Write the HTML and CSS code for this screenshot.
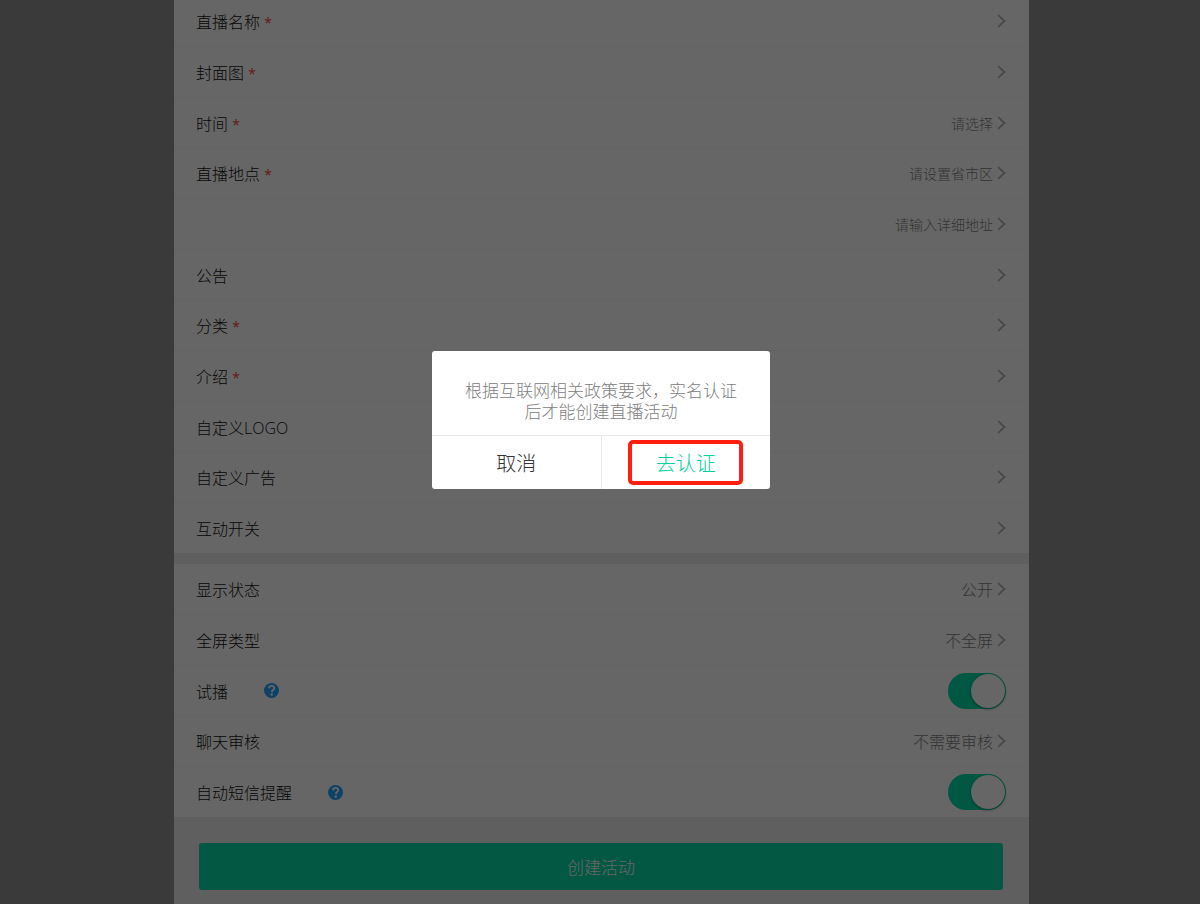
FILE: index.html
```html
<!DOCTYPE html>
<html lang="zh-CN">
<head>
    <meta charset="UTF-8">
    <meta name="viewport" content="width=device-width, initial-scale=1.0">
    <title>创建活动</title>
    <link rel="stylesheet" href="styles.css">
</head>
<body>
    <svg class="sprite" aria-hidden="true">
        <symbol id="arrow" viewBox="0 0 9 14">
            <path d="M1.2 1.2L7.4 7l-6.2 5.8" fill="none" stroke="currentColor" stroke-width="1.8"/>
        </symbol>
        <symbol id="help" viewBox="0 0 14 14">
            <circle cx="7" cy="7" r="7" fill="currentColor"/>
            <path d="M4.7 5C4.8 3.4 5.8 2.7 7.1 2.7s2.4.8 2.4 2.1c0 1.6-2.1 1.8-2.2 3.7" fill="none" stroke="#fff" stroke-width="1.7"/>
            <circle cx="7.2" cy="10.7" r="1.1" fill="#fff"/>
        </symbol>
    </svg>

    <form class="page">
        <!-- Basic info -->
        <div class="list">
            <button type="button" class="row"><span class="label">直播名称 <i class="required">*</i></span><svg class="arrow"><use href="#arrow"/></svg></button>
            <button type="button" class="row"><span class="label">封面图 <i class="required">*</i></span><svg class="arrow"><use href="#arrow"/></svg></button>
            <button type="button" class="row"><span class="label">时间 <i class="required">*</i></span><span class="value hint">请选择</span><svg class="arrow"><use href="#arrow"/></svg></button>
            <button type="button" class="row"><span class="label">直播地点 <i class="required">*</i></span><span class="value hint">请设置省市区</span><svg class="arrow"><use href="#arrow"/></svg></button>
            <div class="row">
                <input type="text" class="address" placeholder="请输入详细地址" aria-label="详细地址">
                <svg class="arrow"><use href="#arrow"/></svg>
            </div>
            <button type="button" class="row"><span class="label">公告</span><svg class="arrow"><use href="#arrow"/></svg></button>
            <button type="button" class="row"><span class="label">分类 <i class="required">*</i></span><svg class="arrow"><use href="#arrow"/></svg></button>
            <button type="button" class="row"><span class="label">介绍 <i class="required">*</i></span><svg class="arrow"><use href="#arrow"/></svg></button>
            <button type="button" class="row"><span class="label">自定义LOGO</span><svg class="arrow"><use href="#arrow"/></svg></button>
            <button type="button" class="row"><span class="label">自定义广告</span><svg class="arrow"><use href="#arrow"/></svg></button>
            <button type="button" class="row"><span class="label">互动开关</span><svg class="arrow"><use href="#arrow"/></svg></button>
        </div>

        <!-- Settings -->
        <div class="list">
            <button type="button" class="row"><span class="label">显示状态</span><span class="value">公开</span><svg class="arrow"><use href="#arrow"/></svg></button>
            <button type="button" class="row"><span class="label">全屏类型</span><span class="value">不全屏</span><svg class="arrow"><use href="#arrow"/></svg></button>
            <div class="row">
                <label class="label" for="trial">试播</label>
                <svg class="help"><use href="#help"/></svg>
                <input type="checkbox" class="switch" id="trial" checked>
            </div>
            <button type="button" class="row"><span class="label">聊天审核</span><span class="value">不需要审核</span><svg class="arrow"><use href="#arrow"/></svg></button>
            <div class="row">
                <label class="label" for="sms">自动短信提醒</label>
                <svg class="help"><use href="#help"/></svg>
                <input type="checkbox" class="switch" id="sms" checked>
            </div>
        </div>

        <div class="submit-bar">
            <button type="submit" class="submit">创建活动</button>
        </div>
    </form>

    <!-- Verification dialog -->
    <div class="mask">
        <div class="dialog" role="dialog" aria-modal="true" aria-describedby="dialogText">
            <p class="dialog-text" id="dialogText">根据互联网相关政策要求，实名认证后才能创建直播活动</p>
            <div class="dialog-actions">
                <div class="action"><button type="button" class="cancel">取消</button></div>
                <div class="action"><button type="button" class="confirm">去认证</button></div>
            </div>
        </div>
    </div>
</body>
</html>
```
FILE: styles.css
```css
:root {
    --page-width: 855px;
    --green: #06dba8;
    --text: #111;
    --muted: #808080;
    --border: #f7f7f7;
}

* {
    margin: 0;
    padding: 0;
    box-sizing: border-box;
}

body {
    font-family: "Open Sans", "Noto Sans CJK SC", sans-serif;
    font-size: 16px;
    font-weight: 300;
    color: var(--text);
    background: #919191;
    min-height: 100vh;
    padding-left: 3px;
    overflow: hidden;
}

button,
input {
    font: inherit;
    color: inherit;
    background: none;
    border: 0;
}

.sprite {
    display: none;
}

.page {
    max-width: var(--page-width);
    min-height: 100vh;
    margin: -4px auto 0;
    background: #ededed;
}

/* Rows */
.list {
    background: #fff;
}

.list + .list {
    margin-top: 11px;
}

.row {
    display: flex;
    align-items: center;
    width: 100%;
    height: 51px;
    padding: 0 23px 0 22px;
    border-bottom: 1px solid var(--border);
    text-align: left;
}

.row:nth-child(3n),
.row:last-child {
    height: 50px;
}

.row:last-child {
    border-bottom: 0;
}

.required {
    font-size: 14px;
    font-style: normal;
    font-weight: 400;
    color: #ff3c3c;
}

.value {
    color: var(--muted);
    margin-left: auto;
}

.hint,
.address {
    font-size: 14px;
}

.address {
    flex: 1;
    text-align: right;
}

.address::placeholder {
    color: var(--muted);
}

.arrow {
    width: 9px;
    height: 14px;
    margin-left: auto;
    color: #b4b4b4;
}

.value + .arrow,
.address + .arrow {
    margin-left: 4px;
}

.help {
    width: 15px;
    height: 15px;
    margin-left: 36px;
    color: #1ea5ff;
}

/* Switch */
.switch {
    appearance: none;
    width: 58px;
    height: 36px;
    margin-left: auto;
    padding: 1px;
    border-radius: 18px;
    background: #ccc;
}

.switch::before {
    content: '';
    display: block;
    width: 34px;
    height: 34px;
    border-radius: 50%;
    background: #fff;
    box-shadow: 0 1px 3px rgba(0, 0, 0, 0.4);
}

.switch:checked {
    background: #00dca5;
}

.switch:checked::before {
    margin-left: auto;
}

/* Submit */
.submit-bar {
    padding: 26px 26px 14px 25px;
}

.submit {
    width: 100%;
    height: 47px;
    border-radius: 3px;
    background: var(--green);
    color: #fff;
    font-size: 17px;
}

/* Dialog */
.mask {
    position: fixed;
    inset: 0;
    display: flex;
    align-items: center;
    justify-content: center;
    padding: 0 0 64px 2px;
    background: rgba(0, 0, 0, 0.6);
}

.dialog {
    width: 338px;
    border-radius: 3px;
    background: #fff;
}

.dialog-text {
    padding: 29px 32px 13px;
    font-size: 17px;
    line-height: 21px;
    text-align: center;
    color: var(--muted);
}

.dialog-actions {
    display: flex;
    border-top: 1px solid #e8e8e8;
    font-size: 20px;
}

.action {
    flex: 1;
    display: flex;
    align-items: center;
    justify-content: center;
    height: 53px;
}

.action + .action {
    border-left: 1px solid #e8e8e8;
}

.cancel {
    color: #333;
}

.confirm {
    width: 115px;
    height: 45px;
    border: 4px solid #ff1e10;
    border-radius: 5px;
    color: #00d29b;
}
```
